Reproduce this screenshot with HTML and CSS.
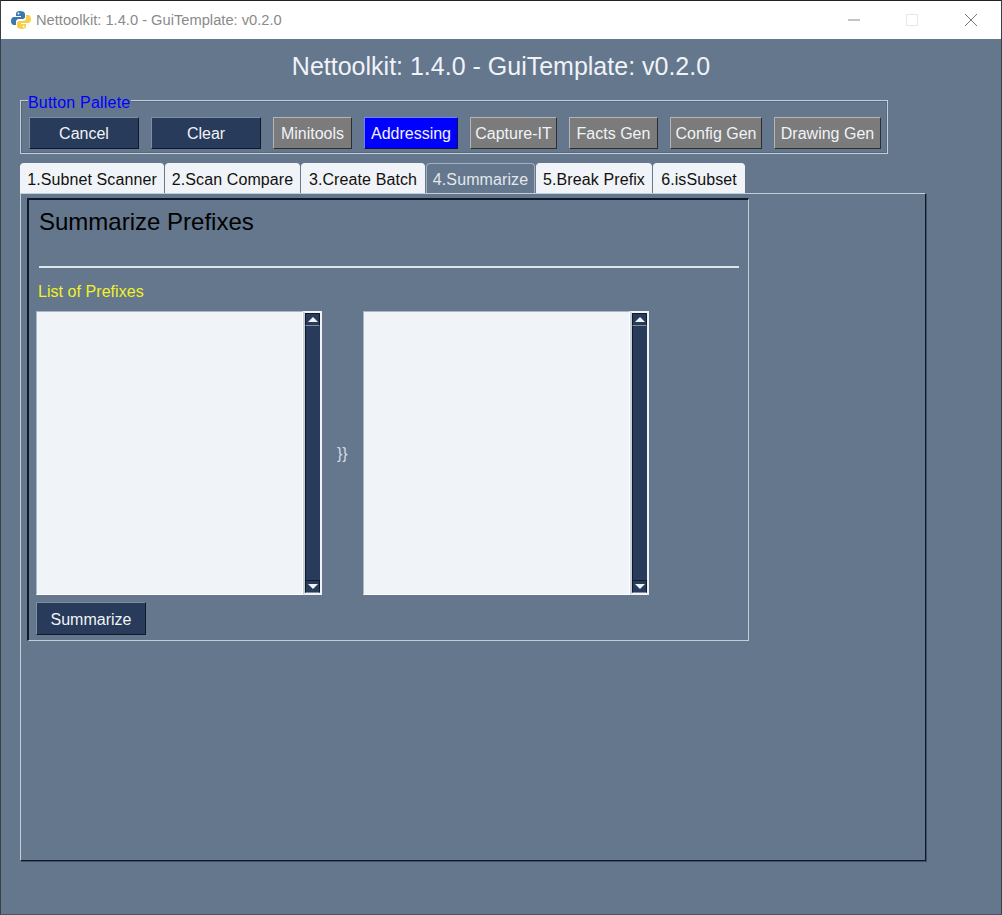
FILE: index.html
```html
<!DOCTYPE html>
<html lang="en">
<head>
    <meta charset="UTF-8">
    <title>Nettoolkit: 1.4.0 - GuiTemplate: v0.2.0</title>
    <link rel="stylesheet" href="styles.css">
</head>
<body>
    <div class="window">
        <div class="titlebar">
            <svg class="app-icon" width="20" height="20" viewBox="0 0 20 20">
                <path fill="#3a78ad" d="M9 1C6 1 5 2 5 4v2h5v1H3C1 7 0 9 0 11s1 4 3 4h2v-3c0-2 1-3 3-3h4c1 0 2-1 2-2V4c0-2-2-3-5-3z"/>
                <path fill="#f7cf45" d="M11 19c3 0 4-1 4-3v-2h-5v-1h7c2 0 3-2 3-4s-1-4-3-4h-2v3c0 2-1 3-3 3H8c-1 0-2 1-2 2v3c0 2 2 3 5 3z"/>
                <circle cx="7.500" cy="3.500" r="1" fill="#fff"/>
                <circle cx="12.500" cy="16.500" r="1" fill="#fff"/>
            </svg>
            <span class="title-text">Nettoolkit: 1.4.0 - GuiTemplate: v0.2.0</span>
            <div class="win-controls">
                <svg width="12" height="12" viewBox="0 0 12 12"><path d="M0 6h12" stroke="#8a8a8a" fill="none"/></svg>
                <svg width="12" height="12" viewBox="0 0 12 12"><path d="M.5.5h11v11H.5z" stroke="#e6e6e6" fill="none"/></svg>
                <svg width="14" height="14" viewBox="0 0 14 14"><path d="M1 1l12 12M13 1L1 13" stroke="#777" fill="none"/></svg>
            </div>
        </div>

        <div class="content">
            <h1 class="app-heading">Nettoolkit: 1.4.0 - GuiTemplate: v0.2.0</h1>

            <div class="palette">
                <span class="palette-legend">Button Pallete</span>
                <button class="btn btn-wide">Cancel</button>
                <button class="btn btn-wide">Clear</button>
                <button class="btn btn-grey btn-minitools">Minitools</button>
                <button class="btn btn-blue">Addressing</button>
                <button class="btn btn-grey btn-capture">Capture-IT</button>
                <button class="btn btn-grey btn-facts">Facts Gen</button>
                <button class="btn btn-grey btn-config">Config Gen</button>
                <button class="btn btn-grey btn-drawing">Drawing Gen</button>
            </div>

            <div class="tabs">
                <div class="tab tab-1">1.Subnet Scanner</div>
                <div class="tab tab-2">2.Scan Compare</div>
                <div class="tab tab-3">3.Create Batch</div>
                <div class="tab tab-4 active">4.Summarize</div>
                <div class="tab tab-5">5.Break Prefix</div>
                <div class="tab tab-6">6.isSubset</div>
            </div>

            <div class="tab-panel">
                <section class="group">
                    <h2>Summarize Prefixes</h2>
                    <hr class="rule">
                    <div class="field-label">List of Prefixes</div>
                    <div class="lists">
                        <div class="listbox">
                            <textarea></textarea>
                            <div class="scrollbar">
                                <div class="arrow"><span class="tri-up"></span></div>
                                <div class="track"></div>
                                <div class="arrow"><span class="tri-down"></span></div>
                            </div>
                        </div>
                        <div class="braces">}}</div>
                        <div class="listbox">
                            <textarea></textarea>
                            <div class="scrollbar">
                                <div class="arrow"><span class="tri-up"></span></div>
                                <div class="track"></div>
                                <div class="arrow"><span class="tri-down"></span></div>
                            </div>
                        </div>
                    </div>
                    <button class="btn btn-summarize">Summarize</button>
                </section>
            </div>
        </div>
    </div>
</body>
</html>
```

FILE: styles.css
```css
* {
    box-sizing: border-box;
}
html, body {
    margin: 0;
    height: 100%;
}
body {
    font-family: 'Liberation Sans', Arial, sans-serif;
    background: #64778d;
}
.window {
    height: 915px;
    border: 1px solid #3a3f46;
    border-bottom-color: #4a5566;
    border-top-color: #222;
    background: #64778d;
    overflow: hidden;
}
.titlebar {
    height: 38px;
    background: #fff;
    display: flex;
    align-items: center;
    padding-left: 10px;
}
.app-icon {
    margin-right: 5px;
}
.title-text {
    font-size: 14.7px;
    color: #8a8a8a;
}
.win-controls {
    margin-left: auto;
    display: flex;
    align-items: center;
    gap: 46px;
    padding-right: 23px;
}
.content {
    padding: 0 0 0 19px;
}
.app-heading {
    margin: 0;
    height: 60px;
    line-height: 55px;
    width: 962px;
    text-align: center;
    font-size: 25px;
    font-weight: normal;
    color: #f0f3f7;
}
.palette {
    position: relative;
    margin: 1px 0 0;
    width: 868px;
    height: 54px;
    padding: 16px 0 0 8px;
    border: 1px solid #c4ced8;
    box-shadow: inset 0 0 0 1px #55677c;
    display: flex;
    align-items: flex-start;
    gap: 12px;
}
.palette .btn {
    height: 32px;
    padding-top: 2px;
}
.palette-legend {
    position: absolute;
    left: 7px;
    top: -7px;
    padding-right: 1px;
    background: #64778d;
    font-size: 16px;
    letter-spacing: 0.2px;
    line-height: 18px;
    color: #0000ff;
}
.btn {
    height: 33px;
    padding: 0;
    font-family: inherit;
    font-size: 16px;
    color: #f0f3f7;
    background: #283b5b;
    border: 1px solid;
    border-color: #7f8fa3 #10192b #10192b #7f8fa3;
    flex: none;
}
.btn-wide {
    width: 110px;
}
.btn-grey {
    background: #7b7b7b;
    border-color: #b5b5b5 #2e2e2e #2e2e2e #b5b5b5;
}
.btn-blue {
    width: 94px;
    background: #0000ff;
    border-color: #6f7fff #10104a #10104a #6f7fff;
}
.btn-minitools { width: 79px; }
.btn-capture { width: 87px; }
.btn-facts { width: 89px; }
.btn-config { width: 92px; }
.btn-drawing { width: 107px; }
.tabs {
    display: flex;
    gap: 1px;
    height: 30px;
    margin-top: 9px;
}
.tab {
    height: 30px;
    background: #f0f3f7;
    color: #111;
    font-size: 16px;
    letter-spacing: 0.1px;
    line-height: 31px;
    text-align: center;
    border-radius: 4px 4px 0 0;
    border: 1px solid #f0f3f7;
    border-bottom: none;
}
.tab.active {
    background: #64778d;
    color: #e3e8ee;
    border-color: #a3b0bf;
}
.tab-1 { width: 144px; }
.tab-2 { width: 135px; }
.tab-3 { width: 124px; }
.tab-4 { width: 109px; }
.tab-5 { width: 116px; }
.tab-6 { width: 92px; }
.tab-panel {
    width: 906px;
    height: 668px;
    border: 1px solid;
    border-color: #c4ced8 #10192b #10192b #c4ced8;
    box-shadow: 1px 1px 0 rgba(16, 25, 43, 0.4);
    padding: 4px 0 0 6px;
}
.group {
    width: 722px;
    height: 443px;
    border: 1px solid;
    border-width: 2px 1px 1px 2px;
    border-color: #10192b #c4ced8 #c4ced8 #10192b;
    padding: 0 0 0 7px;
}
.group h2 {
    margin: 0;
    height: 46px;
    padding: 8px 0 0 3px;
    font-size: 24px;
    line-height: 28px;
    font-weight: normal;
    color: #000;
}
.rule {
    margin: 20px 0 0 3px;
    width: 700px;
    height: 2px;
    border: none;
    background: #dfe5ec;
}
.field-label {
    margin: 14px 0 0 2px;
    height: 20px;
    font-size: 16px;
    letter-spacing: 0.05px;
    line-height: 20px;
    color: #f2f224;
}
.lists {
    display: flex;
    margin-top: 9px;
    height: 284px;
}
.listbox {
    display: flex;
    height: 284px;
    width: 286px;
}
.listbox textarea {
    width: 267px;
    height: 284px;
    margin: 0;
    padding: 0;
    resize: none;
    background: #f0f3f7;
    border: 1px solid;
    border-color: #aab6c3 #fff #fff #aab6c3;
    outline: none;
}
.scrollbar {
    width: 19px;
    height: 284px;
    background: #283b5b;
    border: 2px solid #f0f3f7;
    border-left-color: #c8d0da;
    display: flex;
    flex-direction: column;
}
.arrow {
    height: 13px;
    flex: none;
    background: #283b5b;
    border: 1px solid;
    border-color: #10192b #10192b #7f8fa3 #10192b;
    display: flex;
    align-items: center;
    justify-content: center;
}
.track {
    flex: 1;
    border-left: 1px solid #10192b;
}
.tri-up {
    width: 0;
    height: 0;
    border-left: 5px solid transparent;
    border-right: 5px solid transparent;
    border-bottom: 5px solid #f0f3f7;
}
.tri-down {
    width: 0;
    height: 0;
    border-left: 5px solid transparent;
    border-right: 5px solid transparent;
    border-top: 5px solid #f0f3f7;
}
.braces {
    width: 41px;
    padding: 2px 0 0 15px;
    align-self: center;
    font-size: 16px;
    color: #d3dae2;
}
.btn-summarize {
    display: block;
    margin-top: 7px;
    padding-top: 2px;
    width: 110px;
}
```
